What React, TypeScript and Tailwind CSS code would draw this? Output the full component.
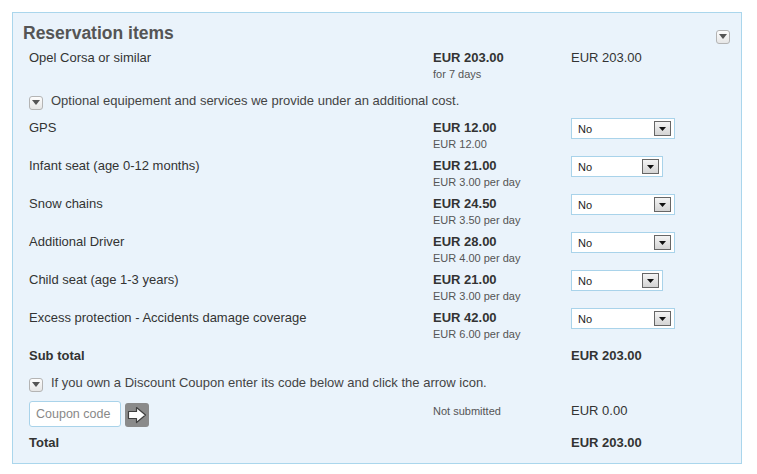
import React from "react";

type Extra = {
  name: string;
  price: string;
  sub: string;
  selectWidth: string;
};

const extras: Extra[] = [
  { name: "GPS", price: "EUR 12.00", sub: "EUR 12.00", selectWidth: "w-[104px]" },
  { name: "Infant seat (age 0-12 months)", price: "EUR 21.00", sub: "EUR 3.00 per day", selectWidth: "w-[92px]" },
  { name: "Snow chains", price: "EUR 24.50", sub: "EUR 3.50 per day", selectWidth: "w-[104px]" },
  { name: "Additional Driver", price: "EUR 28.00", sub: "EUR 4.00 per day", selectWidth: "w-[104px]" },
  { name: "Child seat (age 1-3 years)", price: "EUR 21.00", sub: "EUR 3.00 per day", selectWidth: "w-[92px]" },
  { name: "Excess protection - Accidents damage coverage", price: "EUR 42.00", sub: "EUR 6.00 per day", selectWidth: "w-[104px]" },
];

function ToggleIcon() {
  return (
    <span className="inline-flex w-[14px] h-[14px] items-center justify-center rounded-[3px] border border-[#b4b4b4] bg-gradient-to-b from-[#fdfdfd] to-[#e6e6e6] shrink-0">
      <svg width="8" height="5" viewBox="0 0 8 5">
        <path d="M0 0 H8 L4 5 Z" fill="#555" />
      </svg>
    </span>
  );
}

function FakeSelect({ width }: { width: string }) {
  return (
    <div className={`${width} h-[21px] border border-[#a9d3ea] bg-white flex items-center justify-between pl-[6px] pr-[3px]`}>
      <span className="text-[11px] text-[#222]">No</span>
      <span className="w-[17px] h-[15px] border border-[#666] bg-gradient-to-b from-[#f4f4f4] to-[#d4d4d4] flex items-center justify-center">
        <svg width="7" height="4" viewBox="0 0 7 4">
          <path d="M0 0 H7 L3.5 4 Z" fill="#111" />
        </svg>
      </span>
    </div>
  );
}

export default function App() {
  return (
    <div className="bg-white w-[757px] h-[474px] pt-[12px] pl-[12px] font-['Liberation_Sans',Arial,sans-serif] text-[13px] text-[#333]">
      <div className="w-[730px] h-[452px] border border-[#aad6ec] bg-[#eaf3fb] pl-[16px] pr-[11px]">
        {/* header */}
        <div className="flex items-start justify-between h-[37px] pt-[9px] -ml-[6px]">
          <h2 className="text-[17.5px] font-bold text-[#555] leading-[22px]">Reservation items</h2>
          <span className="mt-[3px]">
            <ToggleIcon />
          </span>
        </div>

        {/* car row */}
        <div className="grid grid-cols-[404px_138px_1fr] h-[43px] leading-4">
          <div>Opel Corsa or similar</div>
          <div>
            <div className="font-bold">EUR 203.00</div>
            <div className="text-[11px] text-[#555]">for 7 days</div>
          </div>
          <div>EUR 203.00</div>
        </div>

        <div className="flex items-start gap-[8px] h-[27px] leading-4">
          <span>
            <ToggleIcon />
          </span>
          <span className="text-[#444]">Optional equipement and services we provide under an additional cost.</span>
        </div>

        {extras.map((e) => (
          <div key={e.name} className="grid grid-cols-[404px_138px_1fr] h-[38px] leading-4">
            <div>{e.name}</div>
            <div>
              <div className="font-bold">{e.price}</div>
              <div className="text-[11px] text-[#555]">{e.sub}</div>
            </div>
            <div className="-mt-[2px]">
              <FakeSelect width={e.selectWidth} />
            </div>
          </div>
        ))}

        <div className="grid grid-cols-[404px_138px_1fr] h-[27px] leading-4 font-bold">
          <div>Sub total</div>
          <div />
          <div>EUR 203.00</div>
        </div>

        <div className="flex items-start gap-[8px] h-[26px] leading-4">
          <span>
            <ToggleIcon />
          </span>
          <span className="text-[#444]">If you own a Discount Coupon enter its code below and click the arrow icon.</span>
        </div>

        <div className="grid grid-cols-[404px_138px_1fr] h-[34px] items-start leading-4">
          <div className="flex items-start gap-[4px]">
            <input
              placeholder="Coupon code"
              className="w-[92px] h-[26px] rounded-[3px] border border-[#a9d3ea] bg-white px-[6px] text-[12.5px] placeholder:text-[#888] outline-none"
            />
            <button className="w-[24px] h-[24px] rounded-[3px] bg-[#8a8a8a] flex items-center justify-center mt-[2px]">
              <svg width="20" height="18" viewBox="0 0 20 18">
                <path d="M1.5 5.5 H9.5 V1.5 L18.5 9 L9.5 16.5 V12.5 H1.5 Z" fill="#fff" stroke="#3f3f3f" strokeWidth="1.2" strokeLinejoin="round" />
              </svg>
            </button>
          </div>
          <div className="text-[11px] text-[#555] mt-[2px]">Not submitted</div>
          <div className="mt-[2px]">EUR 0.00</div>
        </div>

        <div className="grid grid-cols-[404px_138px_1fr] h-[16px] leading-4 font-bold">
          <div>Total</div>
          <div />
          <div>EUR 203.00</div>
        </div>
      </div>
    </div>
  );
}
